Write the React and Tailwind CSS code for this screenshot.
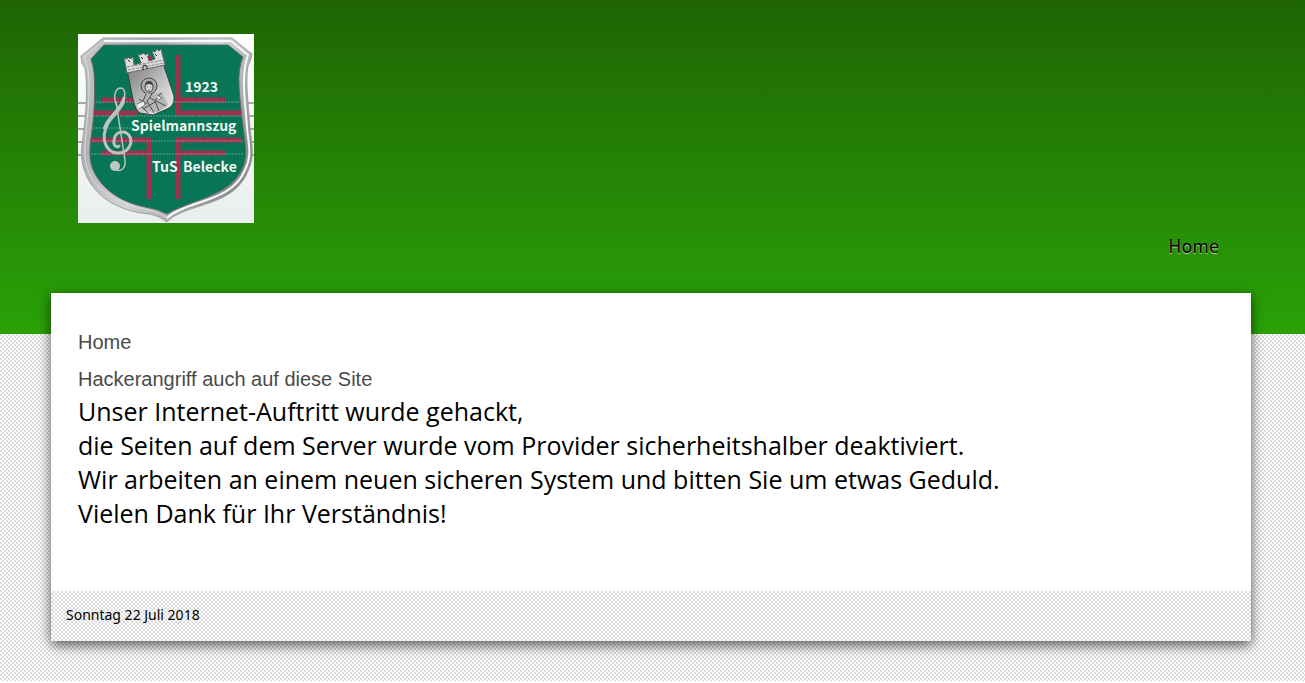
const LINES = [
  'Unser Internet-Auftritt wurde gehackt,',
  'die Seiten auf dem Server wurde vom Provider sicherheitshalber deaktiviert.',
  'Wir arbeiten an einem neuen sicheren System und bitten Sie um etwas Geduld.',
  'Vielen Dank für Ihr Verständnis!',
]

const STAFF = [69, 82, 95, 108, 121]

export default function App() {
  return (
    <div className="bg-white pb-[2px] font-['Noto_Sans',sans-serif] text-black">
      <div className="bg-[repeating-conic-gradient(#dcdcdc_0_25%,#fff_0_50%)] bg-[length:4px_4px] pb-10">
        <header className="flex h-[334px] flex-col bg-linear-to-b from-[#1f6504] to-[#2aa207] pt-[34px] pr-[54px] pl-[51px]">
          <a href="#home" aria-label="Spielmannszug TuS Belecke" className="ml-[27px] self-start">
            <Crest />
          </a>
          <nav className="mt-2 flex justify-end pr-8">
            <a
              href="#home"
              className="font-['Noto_Sans_CJK_SC',sans-serif] text-[18px] leading-[28px] text-black [text-shadow:0_1px_1px_rgba(255,255,255,0.7)]"
            >
              Home
            </a>
          </nav>
        </header>

        <div className="relative -mt-[41px] mr-[54px] ml-[51px] shadow-[0_4px_12px_rgba(0,0,0,0.65)]">
          <main className="bg-white px-[27px] pt-9 pb-[61px]">
            <h1 className="font-['Liberation_Sans',sans-serif] text-[20px] leading-[26px] text-[#4a4a4a]">Home</h1>
            <h2 className="mt-[11px] font-['Liberation_Sans',sans-serif] text-[20px] leading-[26px] text-[#4a4a4a]">
              Hackerangriff auch auf diese Site
            </h2>
            <div className="mt-[2px] font-['Open_Sans',sans-serif] text-[25px] leading-[34px]">
              {LINES.map((line) => (
                <p key={line}>{line}</p>
              ))}
            </div>
          </main>
          <footer className="bg-[repeating-conic-gradient(#dcdcdc_0_25%,#fff_0_50%)] bg-[length:4px_4px] px-[15px] pt-[14px] pb-4 text-[14px] leading-5">
            Sonntag 22 Juli 2018
          </footer>
        </div>
      </div>
    </div>
  )
}

function Crest() {
  return (
    <svg width="176" height="189" viewBox="0 0 176 189" className="block" aria-hidden="true">
      <defs>
        <linearGradient id="paper" x1="0" y1="0" x2="0" y2="1">
          <stop offset="0" stopColor="#fff" />
          <stop offset="1" stopColor="#e9efec" />
        </linearGradient>
        <linearGradient id="rim" x1="0" y1="0" x2="1" y2="0.6">
          <stop offset="0" stopColor="#c9c9cb" />
          <stop offset="0.3" stopColor="#b1b1b4" />
          <stop offset="0.6" stopColor="#d4d4d6" />
          <stop offset="1" stopColor="#8d8d91" />
        </linearGradient>
        <linearGradient id="stone" x1="0" y1="0" x2="1" y2="1">
          <stop offset="0" stopColor="#77777a" />
          <stop offset="0.6" stopColor="#c9c9c9" />
          <stop offset="1" stopColor="#f0f0f0" />
        </linearGradient>
      </defs>
      <rect width="176" height="189" fill="url(#paper)" />
      {STAFF.map((y) => (
        <path key={y} d={`M0 ${y}H176`} stroke="#555b59" strokeWidth="1" />
      ))}

      <path
        d="M25 4H154L174 20Q173 27 170 32C167 48 171 75 172 94C174 112 177 122 170 137C159 166 126 169 105 178Q94 182 89 188Q82 182 72 180C45 178 20 166 9 143C2 128 3 116 5 103C8 82 10 52 7 34Q3 30 3 22Z"
        fill="url(#rim)"
        stroke="#a0a0a4"
        strokeWidth="1"
      />
      <path
        d="M26 7H153L170 21C162 43 168 72 169 94C171 112 174 122 167 136C156 163 124 166 104 175Q94 179 89 184"
        fill="none"
        stroke="#f8f8f8"
        strokeWidth="2"
      />
      <path d="M26 7L6 23Q12 35 11 58C11 82 6 103 7 121C8 149 31 164 53 172C67 176 80 177 89 184" fill="none" stroke="#dcdcde" strokeWidth="1" />
      <path
        d="M26 11H150L165 23Q160 34 161 52C162 70 164 84 166 100C168 116 169 126 163 137C152 158 125 164 106 172Q95 176 89 180Q80 175 67 173C46 169 28 158 19 143C9 128 12 113 14 97C17 76 17 53 16 38Q15 31 13 25Z"
        fill="#087557"
        stroke="#596a65"
        strokeWidth="1"
      />

      <g fill="none" stroke="#9d3250" strokeWidth="5">
        <path d="M100 21V79H163M100 66H148" />
        <path d="M24 66H56M16 79H60" />
        <path d="M13 106H71V165M24 119H71" />
        <path d="M164 106H100V165M100 119H148" />
      </g>
      <g stroke="#b7cec4" strokeWidth="1" strokeDasharray="2 1" opacity="0.5">
        <path d="M15 68H161M15 82H163M15 94H53M14 107H165M13 120H165" />
      </g>

      <CityArms />

      <g fill="none" stroke="#bcc3bd" strokeLinecap="round">
        <path d="M39 72C34 61 38 54 43 54C49 55 47 66 43 72" strokeWidth="1.5" />
        <path d="M46 64C43 76 34 79 29 91C23 104 27 118 39 119C50 120 55 109 52 103C48 95 37 97 36 106C35 112 39 114 41 112" strokeWidth="3" />
        <path d="M45 68C40 79 30 84 27 94" strokeWidth="4" />
        <path d="M38 68L47 126C48 133 44 138 39 136" strokeWidth="1.5" />
      </g>
      <circle cx="37" cy="132" r="5" fill="#c0c7c0" />

      <g fill="#f1f5f1" className="font-['Noto_Sans_CJK_SC',sans-serif] text-[14px] font-bold">
        <text x="107" y="58">1923</text>
        <text x="53" y="97">Spielmannszug</text>
        <text x="74" y="138">TuS</text>
        <text x="105" y="138">Belecke</text>
      </g>
    </svg>
  )
}

// small city coat of arms with a wall crown and a saint on the shield
function CityArms() {
  return (
    <g>
      <path d="M49 36L85 29L96 62Q97 72 89 75L75 81L62 79Q57 76 55 65Z" fill="url(#stone)" stroke="#37413e" strokeWidth="1" />
      <path
        d="M46 24L49 25L50 23L52 25L55 23L56 31L63 29L60 20L63 21L65 19L68 21L70 19L71 27L77 25L74 17L77 18L79 15L81 17L83 15L87 31L49 39Z"
        fill="#dcdcda"
        stroke="#626a67"
        strokeWidth="1"
      />
      <path d="M69 22L73 22L74 26L71 27Z" fill="#9d3250" />
      <path d="M49 33L86 26M50 36L86 29" stroke="#8a8f8c" strokeWidth="1" strokeDasharray="3 1" />
      <path d="M65 36V32Q67 30 69 32V35M50 26L52 28M63 23L65 25M77 20L79 22" fill="none" stroke="#222" strokeWidth="1" />
      <circle cx="71" cy="52" r="8" fill="#aaa" stroke="#444" strokeWidth="1" />
      <ellipse cx="71" cy="53" rx="4" ry="5" fill="#dadada" stroke="#444" strokeWidth="1" />
      <path d="M67 52Q67 47 71 47Q75 47 75 52Q71 48 67 52Z" fill="#444" />
      <path d="M69 53H70M72 53H73M70 56H72" stroke="#333" strokeWidth="0.7" />
      <path d="M59 64L69 59L74 60L84 58L90 71L80 78L65 77Z" fill="#b5b5b3" />
      <path d="M68 60L63 72L70 79M74 60L69 67L76 79M83 59L77 67L81 77M61 65L69 70M72 64L88 72M65 75L77 68" fill="none" stroke="#4a4d4b" strokeWidth="1" />
      <path d="M59 70L66 67L67 71L61 75M79 61L84 64L80 66" fill="#efefed" stroke="#555" strokeWidth="0.7" />
    </g>
  )
}
